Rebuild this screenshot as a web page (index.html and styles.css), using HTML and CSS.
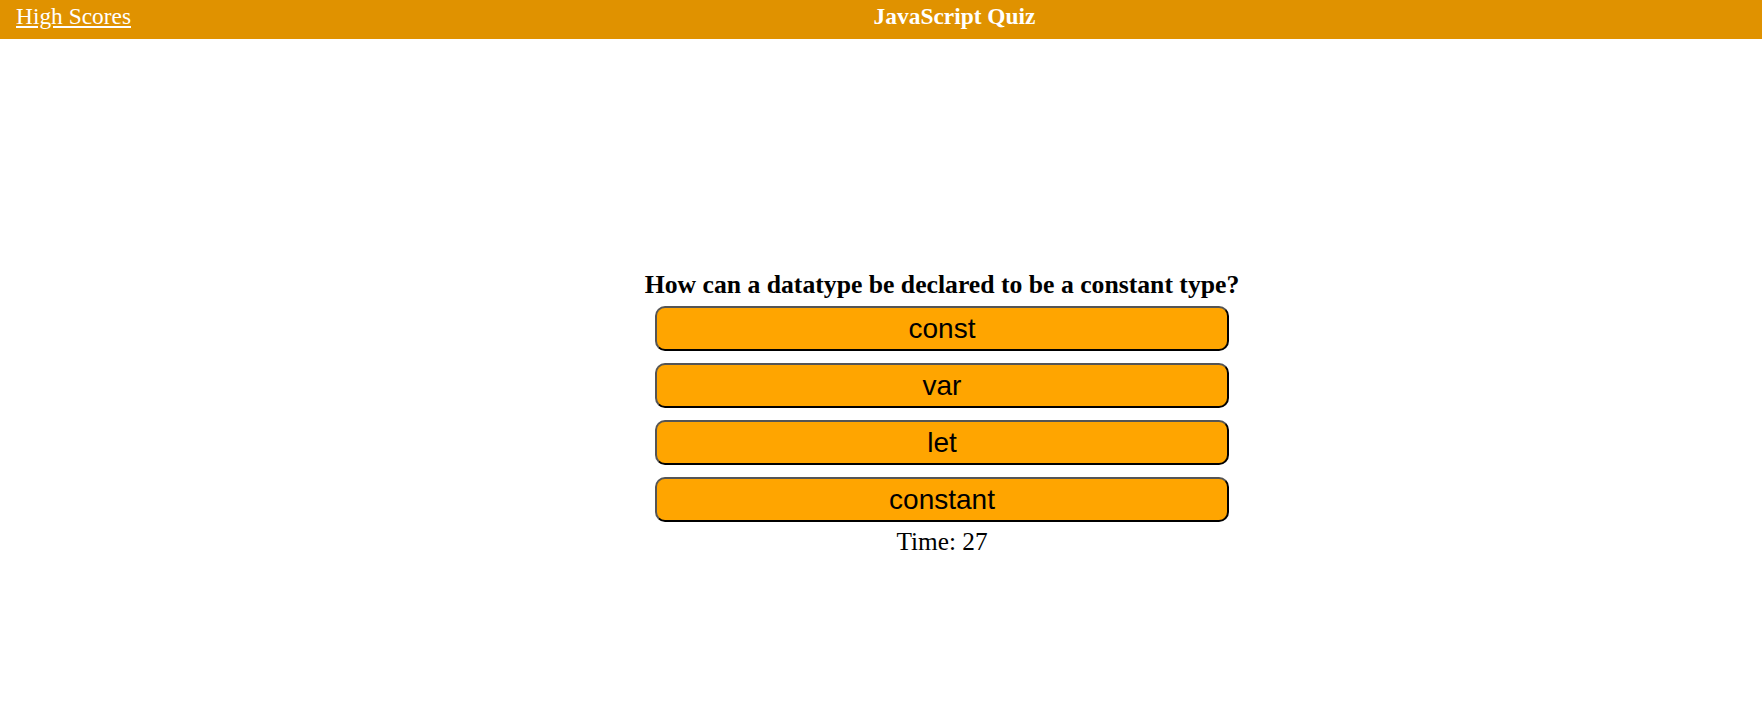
FILE: index.html
```html
<!DOCTYPE html>
<html>
<head>
<meta charset="utf-8">
<title>JavaScript Quiz</title>
<link rel="stylesheet" href="styles.css">
</head>
<body>
<header class="topbar">
  <a class="scores-link" href="#">High Scores</a>
  <h1 class="title">JavaScript Quiz</h1>
</header>
<main class="quiz">
  <h2 class="question">How can a datatype be declared to be a constant type?</h2>
  <div class="answers">
    <button class="answer">const</button>
    <button class="answer">var</button>
    <button class="answer">let</button>
    <button class="answer">constant</button>
  </div>
  <p class="timer">Time: 27</p>
</main>
</body>
</html>
```

FILE: styles.css
```css
html, body {
  margin: 0;
  padding: 0;
  background: #ffffff;
  font-family: "Liberation Serif", "Times New Roman", serif;
}

.topbar {
  display: flex;
  align-items: flex-start;
  height: 39px;
  box-sizing: border-box;
  padding-top: 3px;
  background: #e09200;
  color: #ffffff;
}

.scores-link {
  width: 147px;
  box-sizing: border-box;
  padding-left: 16px;
  color: #ffffff;
  font-size: 23.4px;
  text-decoration: underline;
}

.title {
  flex: 1;
  margin: 0;
  text-align: center;
  font-size: 23.4px;
  font-weight: bold;
}

.quiz {
  display: flex;
  flex-direction: column;
  align-items: center;
  padding-left: 122px;
  padding-top: 231px;
}

.question {
  margin: 0;
  font-size: 25.7px;
  font-weight: bold;
  color: #000000;
  text-align: center;
}

.answers {
  display: flex;
  flex-direction: column;
  gap: 12px;
  margin-top: 6px;
  margin-bottom: 5px;
}

.answer {
  width: 574px;
  height: 45px;
  box-sizing: border-box;
  padding: 0;
  background: #ffa500;
  border: 2px solid;
  border-color: #555555 #000000 #000000 #555555;
  border-radius: 10px;
  font-family: "Liberation Sans", Arial, sans-serif;
  font-size: 28px;
  color: #000000;
  cursor: pointer;
}

.timer {
  margin: 0;
  font-size: 25.3px;
  color: #000000;
}
```
